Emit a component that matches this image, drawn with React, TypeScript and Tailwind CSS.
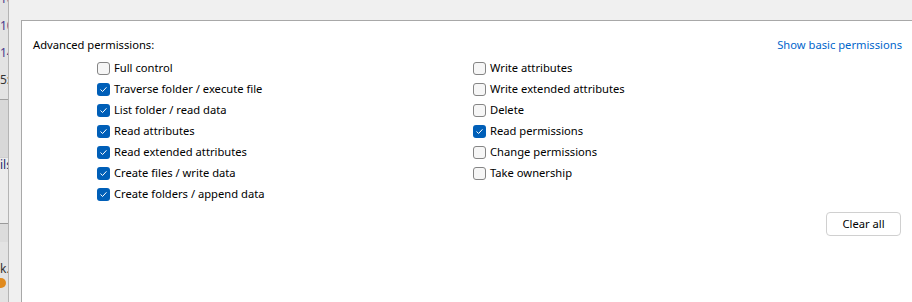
import React from "react";

const left = [
  { label: "Full control", checked: false },
  { label: "Traverse folder / execute file", checked: true },
  { label: "List folder / read data", checked: true },
  { label: "Read attributes", checked: true },
  { label: "Read extended attributes", checked: true },
  { label: "Create files / write data", checked: true },
  { label: "Create folders / append data", checked: true },
];

const right = [
  { label: "Write attributes", checked: false },
  { label: "Write extended attributes", checked: false },
  { label: "Delete", checked: false },
  { label: "Read permissions", checked: true },
  { label: "Change permissions", checked: false },
  { label: "Take ownership", checked: false },
];

function Box({ checked }: { checked: boolean }) {
  if (checked) {
    return (
      <span className="flex h-[13px] w-[13px] shrink-0 items-center justify-center rounded-[3px] bg-[#005fb8]">
        <svg width="9" height="9" viewBox="0 0 9 9" fill="none">
          <path d="M1.8 4.8 L3.6 6.5 L7.2 2.6" stroke="white" strokeWidth="1" strokeLinecap="round" strokeLinejoin="round" />
        </svg>
      </span>
    );
  }
  return <span className="block h-[13px] w-[13px] shrink-0 rounded-[3px] border border-[#858585] bg-[#f6f6f6]" />;
}

function Item({ label, checked }: { label: string; checked: boolean }) {
  return (
    <div className="flex h-[21px] items-center gap-[4px]">
      <Box checked={checked} />
      <span>{label}</span>
    </div>
  );
}

export default function App() {
  return (
    <div
      className="flex h-[302px] w-[912px] overflow-hidden bg-[#f0f0f0] text-[11.2px] text-black"
      style={{ fontFamily: '"Segoe UI", "Noto Sans", sans-serif' }}
    >
      {/* window behind, mostly hidden */}
      <div className="flex w-[9px] shrink-0 flex-col overflow-hidden border-r border-[#b4b4b4] bg-[#e3e3e3] text-[12px] leading-[14px] text-[#4b3c8c]">
        <div className="h-[27px] -mt-[8px] text-right">10</div>
        <div className="h-[27px] text-right">10</div>
        <div className="h-[27px] text-right">14</div>
        <div className="h-[26px] text-right text-[#333]">5:0</div>
        <div className="h-[58px] border-t border-[#a0a0a0] bg-[#d8d8d8]" />
        <div className="h-[66px] border-t border-[#d0d0d0] bg-[#ececec] text-right text-[#1a2a6c]">ils</div>
        <div className="h-[19px] border-t border-[#9a9a9a] bg-[#dcdcdc]" />
        <div className="pt-[20px] text-right text-[#333]">k.c</div>
        <div className="mt-[2px] ml-[-4px] h-[10px] w-[10px] rounded-full bg-[#e08a1e]" />
      </div>

      <div className="flex-1 pl-[12px] pt-[20px]">
        <div className="h-full border-l border-t border-[#a8a8a8] bg-white pl-[11px] pr-[10px] pt-[16px]">
          <div className="flex h-[17px] items-center justify-between">
            <span>Advanced permissions:</span>
            <span className="text-[#0066cc]">Show basic permissions</span>
          </div>
          <div className="mt-[4px] flex pl-[64px]">
            <div className="w-[376px]">
              {left.map((p) => (
                <Item key={p.label} {...p} />
              ))}
            </div>
            <div>
              {right.map((p) => (
                <Item key={p.label} {...p} />
              ))}
            </div>
          </div>
          <div className="mt-[7px] flex justify-end pr-[1px]">
            <button className="h-[24px] w-[75px] rounded-[4px] border border-[#d0d0d0] bg-white">Clear all</button>
          </div>
        </div>
      </div>
    </div>
  );
}
